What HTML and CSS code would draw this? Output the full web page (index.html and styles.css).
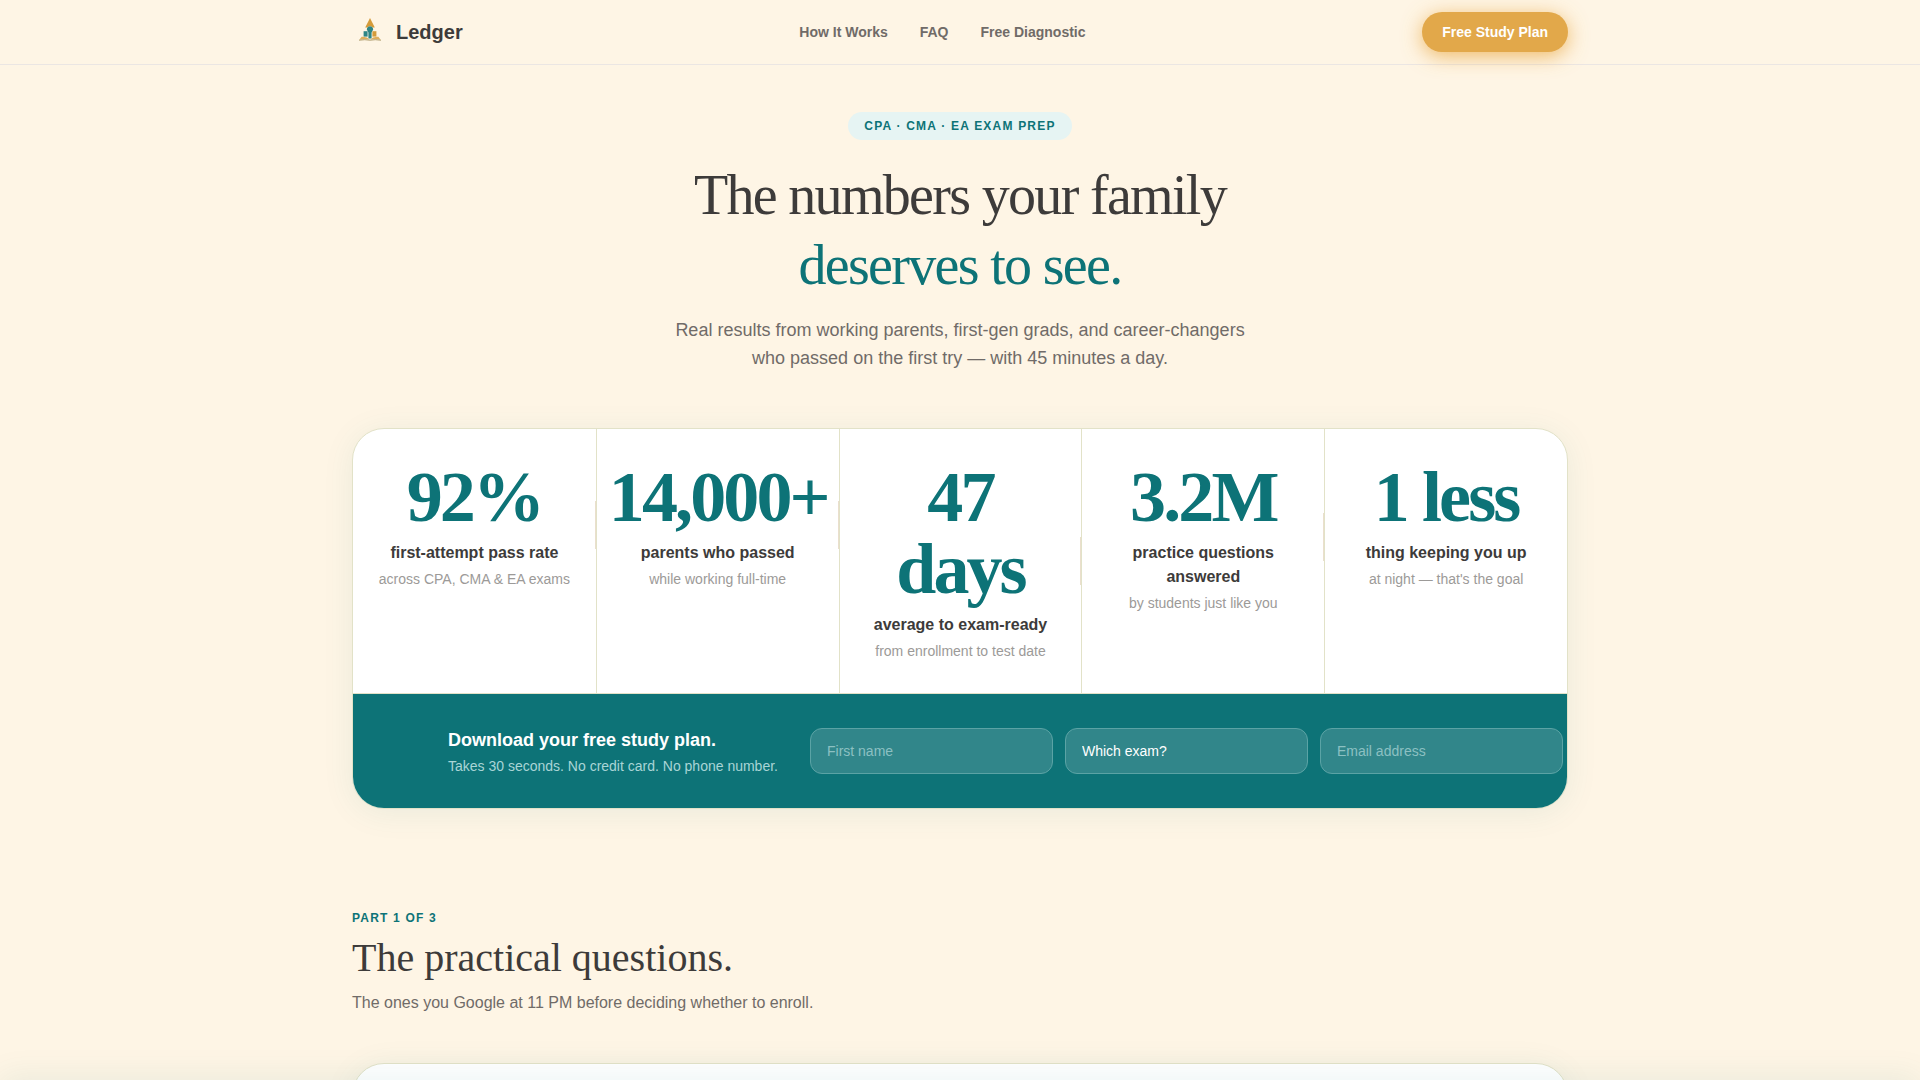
FILE: index.html
```html
<!DOCTYPE html>
<html lang="en">
<head>
  <meta charset="UTF-8">
  <meta name="viewport" content="width=device-width, initial-scale=1">
  <title>Ledger</title>
  <link rel="stylesheet" href="styles.css">
</head>
<body>

  <header class="nav">
    <div class="container nav-inner">
      <a class="brand" href="#">
        <svg class="brand-mark" viewBox="0 0 36 36" aria-hidden="true">
          <path d="M18 4 L20 8 L22.8 13.4 L20.5 13.6 Q18 10.4 15.5 13.6 L13.2 13.4 L16 8 Z" fill="#d49b3a"/>
          <path d="M14.8 15.5 Q15 12.4 18 12.2 Q21 12.4 21.2 15.5 L19.6 18.4 V24.4 H16.4 V18.4 Z" fill="#2e8585"/>
          <path d="M11.6 17.2 H15.6 V22.6 H11.6 Z" fill="#2e8585"/>
          <path d="M20.4 17.2 H24.4 V22.6 H20.4 Z" fill="#d49b3a"/>
          <path d="M9.6 22.8 Q15 22.2 17.6 25.4 Q13 24.2 7.4 25.8 Z" fill="#dfae5c"/>
          <path d="M26.4 22.8 Q21 22.2 18.4 25.4 Q23 24.2 28.6 25.8 Z" fill="#dfae5c"/>
          <path d="M7 26.2 Q13 25.2 18 26.2 Q23 25.2 29 26.2" fill="none" stroke="#a08c55" stroke-width="0.8"/>
        </svg>
        <span>Ledger</span>
      </a>
      <nav class="nav-links">
        <a href="#how">How It Works</a>
        <a href="#faq">FAQ</a>
        <a href="#diagnostic">Free Diagnostic</a>
      </nav>
      <button class="btn-plan" type="button">Free Study Plan</button>
    </div>
  </header>

  <main>
    <section class="container hero">
      <span class="pill">CPA · CMA · EA EXAM PREP</span>
      <h1>The numbers your family<br><span class="accent">deserves to see.</span></h1>
      <p class="lead">Real results from working parents, first-gen grads, and career-changers who passed on the first try — with 45 minutes a day.</p>

      <div class="card">
        <div class="stats">
          <div class="stat">
            <div class="stat-body">
              <div class="stat-number">92%</div>
              <div class="stat-label">first-attempt pass rate</div>
              <div class="stat-note">across CPA, CMA &amp; EA exams</div>
            </div>
          </div>
          <div class="stat">
            <div class="stat-body">
              <div class="stat-number">14,000+</div>
              <div class="stat-label">parents who passed</div>
              <div class="stat-note">while working full-time</div>
            </div>
          </div>
          <div class="stat">
            <div class="stat-body">
              <div class="stat-number">47<br>days</div>
              <div class="stat-label">average to exam-ready</div>
              <div class="stat-note">from enrollment to test date</div>
            </div>
          </div>
          <div class="stat">
            <div class="stat-body">
              <div class="stat-number">3.2M</div>
              <div class="stat-label">practice questions answered</div>
              <div class="stat-note">by students just like you</div>
            </div>
          </div>
          <div class="stat">
            <div class="stat-body">
              <div class="stat-number">1 less</div>
              <div class="stat-label">thing keeping you up</div>
              <div class="stat-note">at night — that's the goal</div>
            </div>
          </div>
        </div>

        <div class="signup">
          <div class="signup-inner">
            <div class="signup-text">
              <p class="signup-title">Download your free study plan.</p>
              <p class="signup-note">Takes 30 seconds. No credit card. No phone number.</p>
            </div>
            <form class="signup-form">
              <input class="field" type="text" name="name" placeholder="First name" aria-label="First name">
              <select class="field" name="exam" aria-label="Which exam?">
                <option>Which exam?</option>
              </select>
              <input class="field" type="email" name="email" placeholder="Email address" aria-label="Email address">
            </form>
          </div>
        </div>
      </div>
    </section>

    <section class="container part" id="faq">
      <p class="eyebrow">PART 1 OF 3</p>
      <h2>The practical questions.</h2>
      <p class="part-lead">The ones you Google at 11 PM before deciding whether to enroll.</p>
      <div class="card questions"></div>
    </section>
  </main>

  <!-- slides up on scroll -->
  <div class="sticky-bar"></div>

</body>
</html>
```
FILE: styles.css
```css
* {
  box-sizing: border-box;
}

body {
  margin: 0;
  font-family: "Liberation Sans", Arial, sans-serif;
  font-size: 16px;
  line-height: 24px;
  color: #3d3b3a;
  background: #fef5e5;
  overflow-x: hidden;
}

h1, h2, p {
  margin: 0;
}

a {
  color: inherit;
  text-decoration: none;
}

.container {
  max-width: 1280px;
  margin: 0 auto;
  padding: 0 32px;
}

/* nav */
.nav {
  border-bottom: 1px solid #ebe6e3;
}

.nav-inner {
  display: flex;
  align-items: center;
  justify-content: space-between;
  height: 64px;
}

.brand {
  display: flex;
  align-items: center;
  gap: 8px;
  font-size: 20px;
  font-weight: bold;
}

.brand-mark {
  width: 36px;
  height: 36px;
}

.nav-links {
  display: flex;
  gap: 32px;
  font-size: 14px;
  font-weight: bold;
  color: #706b68;
}

.btn-plan {
  padding: 10px 20px;
  border: 0;
  border-radius: 20px;
  background: #e2a84a;
  color: #fff;
  font: bold 14px/20px "Liberation Sans", Arial, sans-serif;
  box-shadow: 0 4px 20px rgba(232, 160, 48, 0.7);
}

/* hero */
.hero {
  display: flex;
  flex-direction: column;
  align-items: center;
  padding-top: 47px;
  text-align: center;
}

.pill {
  padding: 6px 16px;
  border-radius: 14px;
  background: #e6f4f3;
  color: #0d7377;
  font-size: 12px;
  font-weight: bold;
  line-height: 16px;
  letter-spacing: 1.2px;
}

h1 {
  margin-top: 20px;
  font: 56px/70px "Liberation Serif", "Times New Roman", serif;
  letter-spacing: -0.03em;
}

.accent {
  color: #0d7377;
}

.lead {
  max-width: 576px;
  margin-top: 16px;
  font-size: 18px;
  line-height: 28px;
  color: #706b68;
}

.card {
  width: 100%;
  border: 1px solid #e2e2c8;
  border-radius: 32px;
  background: #fff;
  box-shadow: 0 4px 32px rgba(13, 115, 119, 0.08);
  overflow: hidden;
}

.hero .card {
  margin-top: 56px;
}

.stats {
  display: grid;
  grid-template-columns: repeat(5, minmax(0, 1fr));
  border-bottom: 1px solid #e2e2c8;
}

.stat {
  padding: 32px 0;
}

.stat + .stat {
  border-left: 1px solid #e2e2c8;
}

.stat-body {
  position: relative;
  padding: 0 12px;
}

.stat:not(:last-child) .stat-body::after {
  content: "";
  position: absolute;
  top: 50%;
  right: 0;
  width: 1px;
  height: 48px;
  background: #eadfcd;
  transform: translateY(-50%);
}

.stat-number {
  margin-bottom: 8px;
  font: bold 72px/72px "Liberation Serif", "Times New Roman", serif;
  letter-spacing: -0.04em;
  color: #0d7377;
}

.stat-label {
  font-weight: bold;
}

.stat-note {
  margin-top: 4px;
  font-size: 14px;
  line-height: 20px;
  color: #9c9a98;
}

/* study plan form */
.signup {
  padding: 32px 0;
  background: #0d7377;
  text-align: left;
}

.signup-inner {
  display: flex;
  align-items: center;
  gap: 32px;
  max-width: 1024px;
  margin: 0 auto;
}

.signup-text {
  flex-shrink: 0;
}

.signup-title {
  font-size: 18px;
  font-weight: bold;
  line-height: 28px;
  color: #fff;
}

.signup-note {
  margin-top: 2px;
  font-size: 14px;
  line-height: 20px;
  color: #a9d5d6;
}

.signup-form {
  display: flex;
  gap: 12px;
}

.field {
  flex: none;
  width: 243px;
  padding: 12px 16px;
  border: 1px solid #5ba3a5;
  border-radius: 12px;
  background: #31868a;
  color: #fff;
  font: 14px/20px "Liberation Sans", Arial, sans-serif;
  appearance: none;
}

.field::placeholder {
  color: #8cc0c2;
}

/* questions */
.part {
  padding-top: 101px;
}

.eyebrow {
  font-size: 12px;
  font-weight: bold;
  line-height: 16px;
  letter-spacing: 1.2px;
  color: #0d7377;
}

h2 {
  margin: 8px 0;
  font: 40px/48px "Liberation Serif", "Times New Roman", serif;
}

.part-lead {
  padding-top: 1px;
  color: #706b68;
}

.questions {
  min-height: 320px;
  margin-top: 48px;
}

.sticky-bar {
  position: fixed;
  left: 0;
  right: 0;
  bottom: 0;
  height: 72px;
  background: #fff;
  box-shadow: 0 -4px 32px rgba(13, 115, 119, 0.08);
  transform: translateY(100%);
}
```
